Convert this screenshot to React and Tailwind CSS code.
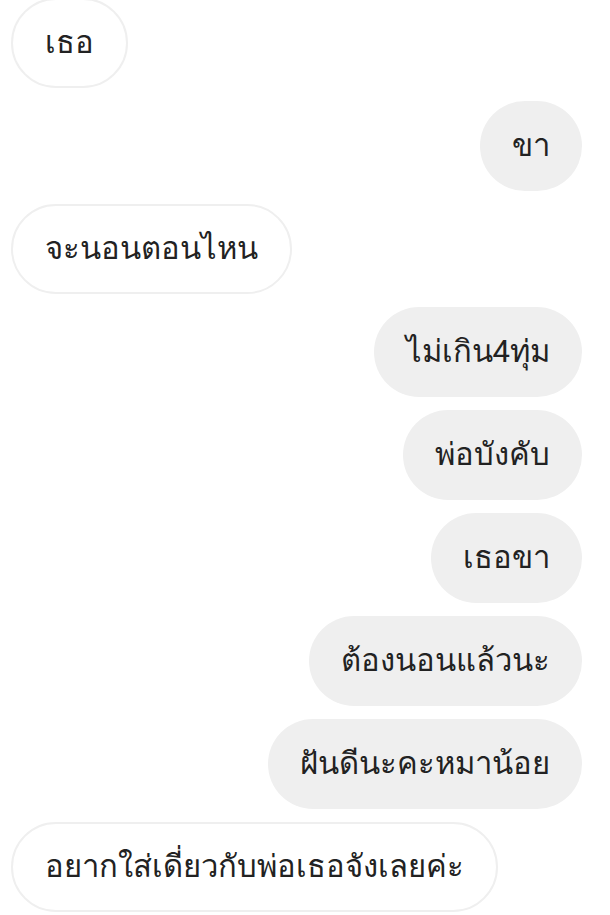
const messages = [
  { side: 'left', text: 'เธอ' },
  { side: 'right', text: 'ขา' },
  { side: 'left', text: 'จะนอนตอนไหน' },
  { side: 'right', text: 'ไม่เกิน4ทุ่ม' },
  { side: 'right', text: 'พ่อบังคับ' },
  { side: 'right', text: 'เธอขา' },
  { side: 'right', text: 'ต้องนอนแล้วนะ' },
  { side: 'right', text: 'ฝันดีนะคะหมาน้อย' },
  { side: 'left', text: 'อยากใส่เดี่ยวกับพ่อเธอจังเลยค่ะ' },
];

export default function App() {
  return (
    <div
      className="w-[610px] h-[915px] overflow-hidden bg-white"
      style={{ fontFamily: 'Roboto, sans-serif' }}
    >
      <div className="flex flex-col gap-[13px] pl-[11px] pr-[28px] -mt-[2px]">
        {messages.map((m, i) => (
          <div key={i} className={m.side === 'left' ? 'flex justify-start' : 'flex justify-end'}>
            <div
              className={
                m.side === 'left'
                  ? 'h-[90px] flex items-center px-8 rounded-[45px] border-2 border-[#efefef] bg-white text-[31px] text-[#222] whitespace-nowrap'
                  : 'h-[90px] flex items-center px-8 rounded-[45px] bg-[#efefef] text-[31px] text-[#222] whitespace-nowrap'
              }
            >
              {m.text}
            </div>
          </div>
        ))}
      </div>
    </div>
  );
}
